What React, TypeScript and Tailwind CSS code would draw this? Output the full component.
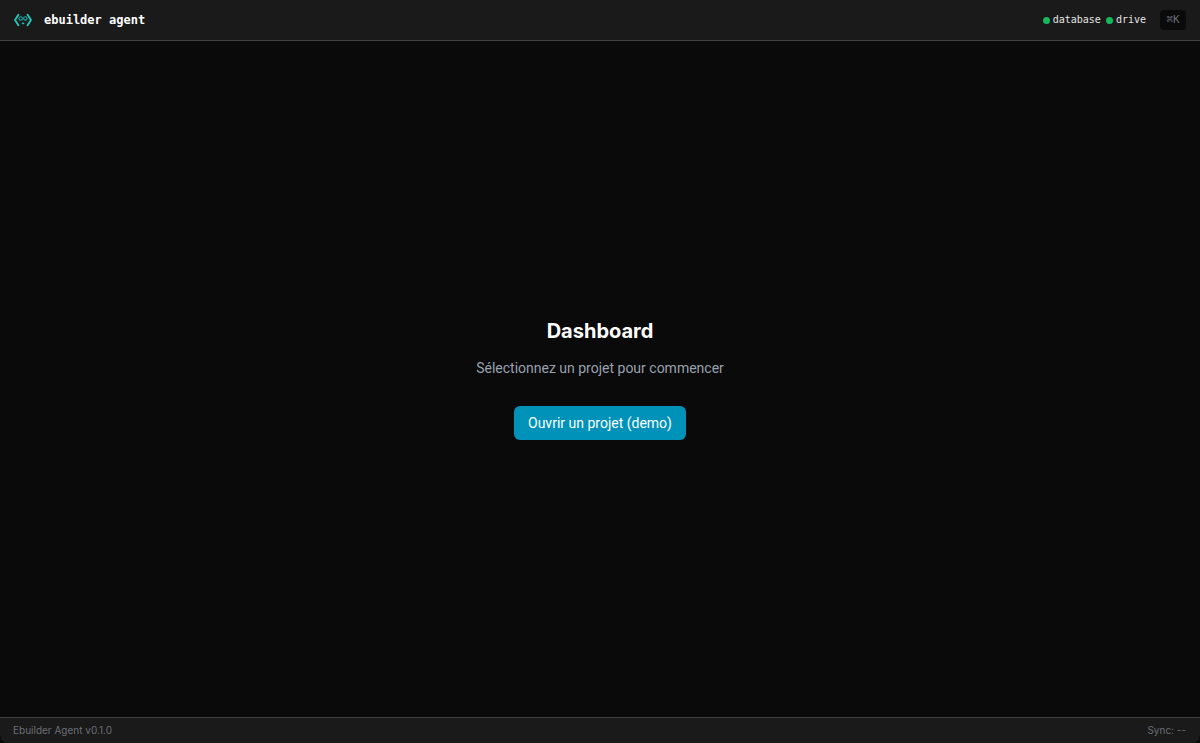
const services = ["database", "drive"]

function Logo() {
  return (
    <svg viewBox="0 0 20 14" className="h-3.5 w-5" fill="none" strokeLinecap="round" strokeLinejoin="round">
      <path d="M5.4 1.8L2 7L5.4 12.2M14.6 1.8L18 7L14.6 12.2" stroke="#1fc7bb" strokeWidth="1.9" />
      <circle cx="7.7" cy="5.4" r="1.7" stroke="#1ba8a3" strokeWidth="1.1" />
      <circle cx="12.3" cy="5.4" r="1.7" stroke="#1ba8a3" strokeWidth="1.1" />
      <path d="M9.6 10.3h.8" stroke="#1fb8b0" strokeWidth="1.8" />
    </svg>
  )
}

function Header() {
  return (
    <header className="flex h-[41px] items-center justify-between border-b border-[#404040] bg-[#1a1a1a] pr-3.5 pl-[13px] font-['DejaVu_Sans_Mono',monospace]">
      <div className="flex items-center gap-[11px]">
        <Logo />
        <h1 className="text-xs font-bold">ebuilder agent</h1>
      </div>
      <div className="flex items-center gap-3.5">
        <ul className="flex items-center gap-[5px]">
          {services.map((service) => (
            <li key={service} className="flex items-center gap-[3px] text-[10px] leading-4 text-neutral-200">
              <span className="size-[7px] rounded-full bg-[#16b85c]" />
              {service}
            </li>
          ))}
        </ul>
        <button className="h-5 w-[26px] rounded bg-[#0a0a0a] text-[11px] leading-4 text-[#666b73]">⌘K</button>
      </div>
    </header>
  )
}

export default function App() {
  return (
    <div className="flex min-h-screen flex-col bg-[#0a0a0a] font-['Roboto',sans-serif] text-white">
      <Header />

      <main className="flex flex-1 flex-col items-center justify-center pt-px">
        <h2 className="mb-[15px] font-['Inter',sans-serif] text-xl leading-6 font-bold">Dashboard</h2>
        <p className="mb-7 text-sm text-[#99a1af]">Sélectionnez un projet pour commencer</p>
        <button className="rounded-md bg-[#0092b8] px-3.5 py-[7px] text-sm">Ouvrir un projet (demo)</button>
      </main>

      <footer className="flex h-[26px] items-center justify-between rounded-b-lg border-t border-[#404040] bg-[#1a1a1a] pr-3.5 pl-[13px] font-['Inter',sans-serif] text-[10px] text-[#6a6e76]">
        <span>Ebuilder Agent v0.1.0</span>
        <span>Sync: --</span>
      </footer>
    </div>
  )
}
